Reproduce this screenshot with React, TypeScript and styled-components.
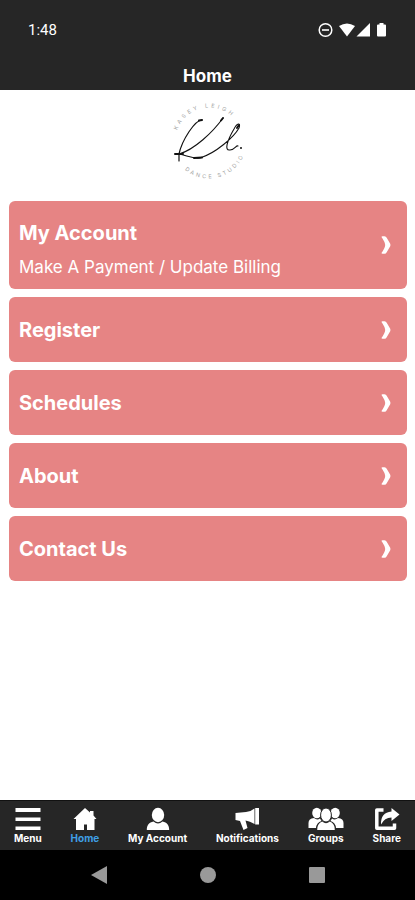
import React from "react";
import styled, { createGlobalStyle } from "styled-components";

const GlobalStyle = createGlobalStyle`
  *, *::before, *::after { box-sizing: border-box; }
  body { margin: 0; background: #fff; font-family: Inter, "Liberation Sans", sans-serif; }
`;

const Screen = styled.div`
  display: flex;
  flex-direction: column;
  min-height: 100vh;
  background: #fff;
`;

const Header = styled.header`
  background: #262626;
  color: #fff;
`;

const StatusBar = styled.div`
  display: flex;
  align-items: center;
  justify-content: space-between;
  height: 60px;
  padding: 0 28px;
  font: 400 15px/20px Roboto, sans-serif;
`;

const StatusIcons = styled.div`
  display: flex;
  align-items: center;
  svg { display: block; }
`;

const Title = styled.h1`
  margin: 0;
  height: 30px;
  font-size: 17px;
  line-height: 32px;
  font-weight: 700;
  text-align: center;
`;

const Main = styled.main`
  flex: 1;
  padding: 9px 8px 16px 9px;
`;

const Logo = styled.svg`
  display: block;
  width: 84px;
  height: 84px;
  margin: 0 auto 18px;
`;

const CardList = styled.nav`
  display: flex;
  flex-direction: column;
  gap: 8px;
`;

const Card = styled.a`
  display: flex;
  align-items: center;
  justify-content: space-between;
  min-height: 65px;
  padding: 0 16px 0 10px;
  border-radius: 6px;
  background: #e68484;
  color: #fff;
  text-decoration: none;
`;

const CardText = styled.span<{ $hasNote?: boolean }>`
  display: flex;
  flex-direction: column;
  gap: 4px;
  padding: ${(p) => (p.$hasNote ? "16px 0 8px" : "16px 0")};
`;

const CardTitle = styled.span`
  font-size: 20px;
  line-height: 32px;
  font-weight: 700;
`;

const CardNote = styled.span`
  font-size: 17px;
  line-height: 28px;
`;

const TabBar = styled.nav`
  display: flex;
  justify-content: space-between;
  height: 50px;
  padding: 5px 14px 0;
  background: #262626;
  border-top: 1px solid #111;
`;

const Tab = styled.a<{ $active?: boolean }>`
  display: flex;
  flex-direction: column;
  align-items: center;
  color: ${(p) => (p.$active ? "#3f9fe5" : "#fff")};
  font-size: 10px;
  line-height: 12px;
  font-weight: 700;
  text-decoration: none;
  svg { display: block; color: #fff; }
`;

const SystemBar = styled.div`
  display: grid;
  grid-template-columns: repeat(3, 1fr);
  height: 50px;
  padding: 0 44px;
  background: #000;
`;

const SystemButton = styled.button`
  display: grid;
  place-items: center;
  padding: 0;
  border: 0;
  background: none;
  color: #999;
`;

const Chevron = () => (
  <svg width="10" height="18" viewBox="0 0 10 18" fill="currentColor" aria-hidden="true">
    <path d="M.5 1Q.5 .3 1.500 .3H3.500Q5 .3 5.700 1.800L9.200 7.800Q9.700 9 9.200 10.200L5.700 16.200Q5 17.700 3.500 17.700H1.500Q.5 17.700 .5 17Q4 12 4.200 9Q4 6 .5 1Z" />
  </svg>
);

const cards = [
  { title: "My Account", note: "Make A Payment / Update Billing" },
  { title: "Register" },
  { title: "Schedules" },
  { title: "About" },
  { title: "Contact Us" },
];

const tabs = [
  {
    label: "Menu",
    icon: (
      <svg width="26" height="26" viewBox="0 0 26 26" fill="currentColor" aria-hidden="true">
        <path d="M.5 2H25.500V6H.5ZM.5 11.500H25.500V15H.5ZM.5 20.500H25.500V24H.5Z" />
      </svg>
    ),
  },
  {
    label: "Home",
    active: true,
    icon: (
      <svg width="24" height="26" viewBox="0 0 24 26" fill="currentColor" aria-hidden="true">
        <path d="M12 2L17 6.500V5H20.500V9.500L23.500 13H21.500V24H14V18.500H11V24H3V13H.5Z" />
      </svg>
    ),
  },
  {
    label: "My Account",
    icon: (
      <svg width="24" height="26" viewBox="0 0 24 26" fill="currentColor" aria-hidden="true">
        <ellipse cx="12" cy="9" rx="6.200" ry="7.200" />
        <path d="M.8 24C.8 19 3 16.500 7.500 15.500Q12 19.500 16.500 15.500C21 16.500 23.200 19 23.200 24Z" />
      </svg>
    ),
  },
  {
    label: "Notifications",
    icon: (
      <svg width="24" height="26" viewBox="0 0 24 26" fill="currentColor" aria-hidden="true">
        <path d="M.5 7L11 6Q16 5.500 19.500 2.500V18Q15 15 10.500 14.500L12.500 22L8.500 24L5 15L.5 14ZM20.200 2H24V18.500H20.200Z" />
      </svg>
    ),
  },
  {
    label: "Groups",
    icon: (
      <svg width="36" height="26" viewBox="0 0 36 26" fill="currentColor" aria-hidden="true">
        <ellipse cx="8.800" cy="7" rx="4.600" ry="5.200" />
        <ellipse cx="27.200" cy="7" rx="4.600" ry="5.200" />
        <path d="M.5 22V17Q.5 12.500 6 12Q9 14.500 12 12.500L13.500 15Q8.500 16.500 8 22ZM35.500 22V17Q35.500 12.500 30 12Q27 14.500 24 12.500L22.500 15Q27.500 16.500 28 22Z" />
        <ellipse cx="18" cy="9" rx="5.400" ry="7" stroke="#262626" />
        <path d="M9.200 24Q9 17.500 14.200 15.500Q18 19 21.800 15.500Q27 17.500 26.800 24Z" />
      </svg>
    ),
  },
  {
    label: "Share",
    icon: (
      <svg width="26" height="26" viewBox="0 0 26 26" fill="none" aria-hidden="true">
        <path d="M9.500 4H2.800V22.300H20.500V17.500" stroke="currentColor" strokeWidth="3.500" strokeLinejoin="round" />
        <path d="M17.500 2L25.500 8.500L17.500 15V11.500Q10.500 11.500 7 18.500Q6.500 6.500 17.500 5.500Z" fill="currentColor" />
      </svg>
    ),
  },
];

export default function App() {
  return (
    <Screen>
      <GlobalStyle />
      <Header>
        <StatusBar>
          <span>1:48</span>
          <StatusIcons>
            <svg width="70" height="16" viewBox="0 0 70 16" fill="#fff" aria-hidden="true">
              <circle cx="8.500" cy="8" r="6.300" fill="none" stroke="#fff" strokeWidth="1.500" />
              <path d="M5 7.200H12V8.800H5Z" />
              <path d="M22 4Q30-1 38 4L30 14.500Z" />
              <path d="M53 1V14.500H39.500Z" />
              <path d="M62.500 1H66.500V2.500H68Q69 2.500 69 3.500V13.500Q69 14.500 68 14.500H61Q60 14.500 60 13.500V3.500Q60 2.500 61 2.500H62.500Z" />
            </svg>
          </StatusIcons>
        </StatusBar>
        <Title>Home</Title>
      </Header>
      <Main>
        <Logo viewBox="0 0 84 84" role="img" aria-label="Kasey Leigh Dance Studio">
          <defs>
            <path id="ring-top" d="M9.500 42A33.500 33.500 0 0 1 76.500 42" />
            <path id="ring-bottom" d="M5.500 42A37.500 37.500 0 0 0 80.500 42" />
          </defs>
          <g fill="#a3a3a3" fontFamily="Inter, sans-serif" fontSize="5.500" letterSpacing="2.500">
            <text letterSpacing="3"><textPath href="#ring-top" startOffset="43%" textAnchor="middle">KASEY LEIGH</textPath></text>
            <text><textPath href="#ring-bottom" startOffset="58%" textAnchor="middle">DANCE STUDIO</textPath></text>
          </g>
          <g fill="none" stroke="#111" strokeLinecap="round" strokeLinejoin="round">
            <path d="M36 21C29 21 16 41 13 55L13 62" strokeWidth="1.200" />
            <path d="M57 19C47 33 28 51 13 55C22 57 27 60 34 59C50 54 68 38 73 29C75 23 71 24 68 30C61 42 58 52 64 51C69 51 70 46 72 47" strokeWidth="1.100" />
            <path d="M9 55H17M33 21.500L36 21M55 21.500L57 19M28 59L36 58.500M71 29L73 26M75 49V49" strokeWidth="2" />
          </g>
        </Logo>
        <CardList aria-label="Sections">
          {cards.map((c) => (
            <Card key={c.title} href="#">
              <CardText $hasNote={Boolean(c.note)}>
                <CardTitle>{c.title}</CardTitle>
                {c.note && <CardNote>{c.note}</CardNote>}
              </CardText>
              <Chevron />
            </Card>
          ))}
        </CardList>
      </Main>
      <TabBar aria-label="Main">
        {tabs.map((t) => (
          <Tab key={t.label} href="#" $active={t.active} aria-current={t.active ? "page" : undefined}>
            {t.icon}
            {t.label}
          </Tab>
        ))}
      </TabBar>
      <SystemBar>
        <SystemButton aria-label="Back">
          <svg width="18" height="20" viewBox="0 0 18 20" fill="currentColor"><path d="M17 1V19L1 10Z" /></svg>
        </SystemButton>
        <SystemButton aria-label="Home screen">
          <svg width="16" height="16" viewBox="0 0 16 16" fill="currentColor"><circle cx="8" cy="8" r="8" /></svg>
        </SystemButton>
        <SystemButton aria-label="Recent apps">
          <svg width="18" height="18" viewBox="0 0 18 18" fill="currentColor"><rect x="1" y="1" width="16" height="16" rx="1" /></svg>
        </SystemButton>
      </SystemBar>
    </Screen>
  );
}
